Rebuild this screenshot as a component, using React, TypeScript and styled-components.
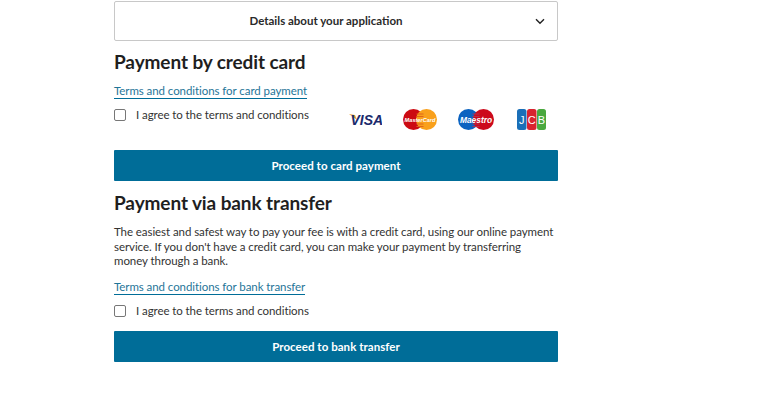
import { createGlobalStyle, styled } from "styled-components";

const GlobalStyle = createGlobalStyle`
  html, body { margin: 0; padding: 0; background: #fff; }
  body { font-family: "Lato", "Liberation Sans", sans-serif; color: #1c1c1c; }
`;

const Page = styled.div`
  width: 444px;
  margin-left: 114px;
  padding-top: 1px;
  display: flex;
  flex-direction: column;
`;

const Accordion = styled.div`
  height: 40px;
  box-sizing: border-box;
  border: 1px solid #c8c8c8;
  border-radius: 2px;
  padding: 0 20px 2px 0;
  display: flex;
  align-items: center;
  justify-content: center;
  position: relative;
  font-size: 11.5px;
  font-weight: 700;
  color: #2a2a2a;
`;

const Chevron = styled.svg`
  position: absolute;
  right: 12px;
  top: 16px;
`;

const Heading = styled.h2`
  margin: ${p => p.$top}px 0 0;
  font-size: 19px;
  line-height: 23px;
  font-weight: 700;
  letter-spacing: -0.1px;
  color: #1f1f1f;
`;

const TermsLink = styled.a`
  align-self: flex-start;
  display: block;
  margin-top: ${p => p.$top}px;
  font-size: 11.5px;
  line-height: 14px;
  letter-spacing: -0.07px;
  color: #1f7598;
  border-bottom: 1px solid #006d98;
`;

const AgreeRow = styled.div`
  display: flex;
  justify-content: space-between;
  align-items: flex-start;
`;

const AgreeLabel = styled.label`
  display: flex;
  align-items: center;
  gap: 10px;
  margin-top: 8px;
  font-size: 11.5px;
  line-height: 16px;
  letter-spacing: -0.08px;
  color: #333;
`;

const Box = styled.span`
  width: 10px;
  height: 10px;
  border: 1px solid #777;
  border-radius: 2px;
  background: #fff;
  display: block;
`;

const Logos = styled.div`
  display: flex;
  align-items: center;
  margin-right: 12px;
  margin-top: 10px;
  gap: 21px;
`;

const ProceedButton = styled.button`
  width: 100%;
  height: 31px;
  border: 0;
  border-radius: 1px;
  background: #006d98;
  color: #fff;
  font-family: inherit;
  font-size: 11.5px;
  font-weight: 700;
  letter-spacing: 0.05px;
  margin-top: ${p => p.$top}px;
  padding: 0 0 1px;
`;

const Body = styled.p`
  margin: 11px 0 0;
  padding-right: 3px;
  font-size: 11.5px;
  line-height: 14.5px;
  letter-spacing: -0.07px;
  color: #333;
`;

function Visa() {
  return (
    <svg width="33" height="21" viewBox="0 0 33 21">
      <path d="M0 5 L6 6 L8 11 Z" fill="#e8a23a" />
      <text x="1.5" y="16" fontFamily="Liberation Sans" fontSize="14" fontWeight="700" fontStyle="italic" fill="#1a2a6c">VISA</text>
    </svg>
  );
}

function OverlapStripes({ x, color }: { x: number; color: string }) {
  return (
    <path
      d={`M${x} 5H${x + 7}M${x} 7.5H${x + 7}M${x} 15H${x + 7}M${x} 17.5H${x + 7}`}
      stroke={color}
      strokeWidth="1"
    />
  );
}

function MasterCard() {
  return (
    <svg width="34" height="21" viewBox="0 0 34 21">
      <circle cx="10.5" cy="10.5" r="10.5" fill="#cc0a12" />
      <circle cx="23.5" cy="10.5" r="10.5" fill="#f9a01b" />
      <OverlapStripes x={13.5} color="#e0661a" />
      <text x="17" y="12.8" textAnchor="middle" fontFamily="Liberation Sans" fontSize="5.6" fontWeight="700" fontStyle="italic" fill="#fff">MasterCard</text>
    </svg>
  );
}

function Maestro() {
  return (
    <svg width="36" height="21" viewBox="0 0 36 21">
      <circle cx="10.5" cy="10.5" r="10.5" fill="#0b62c0" />
      <circle cx="25.5" cy="10.5" r="10.5" fill="#cc0a1c" />
      <OverlapStripes x={14.5} color="#b03050" />
      <text x="18" y="13.5" textAnchor="middle" fontFamily="Liberation Sans" fontSize="8.4" fontWeight="700" fontStyle="italic" fill="#fff">Maestro</text>
    </svg>
  );
}

function Jcb() {
  return (
    <svg width="31" height="21" viewBox="0 0 31 21">
      <rect x="2" y="0" width="9.5" height="21" rx="2.5" fill="#1a6fb8" />
      <rect x="12" y="0" width="9.5" height="21" rx="2.5" fill="#d8232f" />
      <rect x="22" y="0" width="9" height="21" rx="2.5" fill="#4aa83f" />
      <text x="6.7" y="15" textAnchor="middle" fontFamily="Liberation Sans" fontSize="11" fill="#fff">J</text>
      <text x="16.7" y="15" textAnchor="middle" fontFamily="Liberation Sans" fontSize="11" fill="#fff">C</text>
      <text x="26.5" y="15" textAnchor="middle" fontFamily="Liberation Sans" fontSize="11" fill="#fff">B</text>
    </svg>
  );
}

export default function App() {
  return (
    <>
      <GlobalStyle />
      <Page>
        <Accordion>
          Details about your application
          <Chevron width="10" height="7" viewBox="0 0 10 7">
            <path d="M1 1.2 L5 5.2 L9 1.2" fill="none" stroke="#222" strokeWidth="1.4" />
          </Chevron>
        </Accordion>
        <Heading $top={9}>Payment by credit card</Heading>
        <TermsLink $top={11}>Terms and conditions for card payment</TermsLink>
        <AgreeRow>
          <AgreeLabel>
            <Box />
            I agree to the terms and conditions
          </AgreeLabel>
          <Logos>
            <Visa />
            <MasterCard />
            <Maestro />
            <Jcb />
          </Logos>
        </AgreeRow>
        <ProceedButton $top={20}>Proceed to card payment</ProceedButton>
        <Heading $top={10}>Payment via bank transfer</Heading>
        <Body>
          The easiest and safest way to pay your fee is with a credit card, using our online payment
          service. If you don't have a credit card, you can make your payment by transferring
          money through a bank.
        </Body>
        <TermsLink $top={11.5}>Terms and conditions for bank transfer</TermsLink>
        <AgreeLabel>
          <Box />
          I agree to the terms and conditions
        </AgreeLabel>
        <ProceedButton $top={12}>Proceed to bank transfer</ProceedButton>
      </Page>
    </>
  );
}
